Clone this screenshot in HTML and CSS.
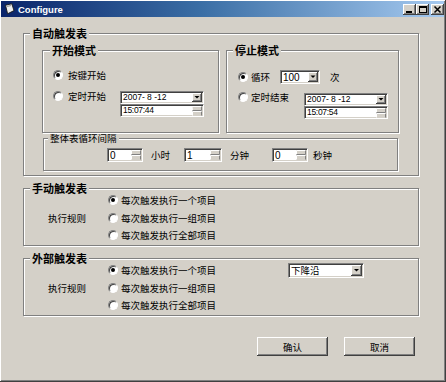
FILE: index.html
```html
<!DOCTYPE html>
<html>
<head>
<meta charset="utf-8">
<title>Configure</title>
<link rel="stylesheet" href="styles.css">
</head>
<body>
<div class="window">
  <div class="titlebar">
    <svg class="app-icon" width="12" height="12" viewBox="0 0 12 12"><path d="M2.5 2.2 L8.8 0.8 L11 7.6 L4.6 10.8 Z" fill="#f0f0f0" stroke="#1a1a1a" stroke-width="0.9"/><path d="M4 3.4 L8 2.6" stroke="#7a7a7a" stroke-width="0.8"/></svg>
    <span class="title-text">Configure</span>
    <div class="caption-btns">
      <div class="cap-btn"><svg width="13" height="11" viewBox="0 0 13 11"><rect x="3" y="7" width="6" height="2" fill="#000"/></svg></div>
      <div class="cap-btn"><svg width="13" height="11" viewBox="0 0 13 11"><rect x="3.5" y="2.5" width="7" height="6" fill="none" stroke="#000"/><rect x="3" y="2" width="8" height="2" fill="#000"/></svg></div>
      <div class="cap-btn close"><svg width="13" height="11" viewBox="0 0 13 11"><path d="M3.5 2.5 L9.5 8.5 M9.5 2.5 L3.5 8.5" stroke="#000" stroke-width="1.5"/></svg></div>
    </div>
  </div>

  <div class="client">
    <div class="group g-auto">
      <div class="gtitle bold">自动触发表</div>
      <div class="mode-row">
        <div class="group g-start">
          <div class="gtitle bold t-start">开始模式</div>
          <div class="opt start-r1"><span class="radio checked"></span><span class="lbl">按键开始</span></div>
          <div class="opt opt-top start-r2">
            <span class="radio"></span><span class="lbl">定时开始</span>
            <div class="dt dt-start">
              <div class="field date"><span class="val">2007- 8 -12</span>
                <svg class="ddb" width="10" height="9" viewBox="0 0 10 9"><rect width="10" height="9" fill="#404040"/><rect width="9" height="8" fill="#fff"/><rect x="1" y="1" width="8" height="7" fill="#808080"/><rect x="1" y="1" width="7" height="6" fill="#d4d0c8"/><path d="M2.5 3 H7.5 L5 5.5 Z" fill="#000"/></svg>
              </div>
              <div class="field time"><span class="val tval">15:07:44</span>
                <svg class="spn" width="10" height="10" viewBox="0 0 10 10"><rect width="10" height="10" fill="#d4d0c8"/><path d="M0 0.5H9.5V4.5H0.5Z" fill="none" stroke="#fff"/><path d="M0.5 4.5H9.5V0.5" fill="none" stroke="#808080"/><path d="M0.5 5.5H9.5V9.5" fill="none" stroke="#808080"/><path d="M0.5 9.5V5.5H9.5" fill="none" stroke="#fff"/></svg>
              </div>
            </div>
          </div>
        </div>

        <div class="group g-stop">
          <div class="gtitle bold">停止模式</div>
          <div class="opt stop-r1">
            <span class="radio checked"></span><span class="lbl lbl-stop w-loop">循环</span>
            <div class="field combo-100"><span class="val num">100</span>
              <svg class="ddb" width="10" height="10" viewBox="0 0 10 10"><rect width="10" height="10" fill="#404040"/><rect width="9" height="9" fill="#fff"/><rect x="1" y="1" width="8" height="8" fill="#808080"/><rect x="1" y="1" width="7" height="7" fill="#d4d0c8"/><path d="M2.5 3.5 H7.5 L5 6 Z" fill="#000"/></svg>
            </div>
            <span class="times">次</span>
          </div>
          <div class="opt opt-top stop-r2">
            <span class="radio"></span><span class="lbl lbl-stop">定时结束</span>
            <div class="dt dt-stop">
              <div class="field date"><span class="val">2007- 8 -12</span>
                <svg class="ddb" width="10" height="9" viewBox="0 0 10 9"><rect width="10" height="9" fill="#404040"/><rect width="9" height="8" fill="#fff"/><rect x="1" y="1" width="8" height="7" fill="#808080"/><rect x="1" y="1" width="7" height="6" fill="#d4d0c8"/><path d="M2.5 3 H7.5 L5 5.5 Z" fill="#000"/></svg>
              </div>
              <div class="field time"><span class="val tval">15:07:54</span>
                <svg class="spn" width="10" height="10" viewBox="0 0 10 10"><rect width="10" height="10" fill="#d4d0c8"/><path d="M0.5 4.5V0.5H9.5" fill="none" stroke="#fff"/><path d="M0.5 4.5H9.5V0.5" fill="none" stroke="#808080"/><path d="M0.5 5.5H9.5V9.5" fill="none" stroke="#808080"/><path d="M0.5 9.5V5.5H9.5" fill="none" stroke="#fff"/></svg>
              </div>
            </div>
          </div>
        </div>
      </div>

      <div class="group g-interval">
        <div class="gtitle t-int">整体表循环间隔</div>
        <div class="int-row">
          <div class="field spinbox sb1"><span class="val num">0</span>
            <svg class="spn" width="10" height="10" viewBox="0 0 10 10"><rect width="10" height="10" fill="#d4d0c8"/><path d="M0.5 4.5V0.5H9.5" fill="none" stroke="#fff"/><path d="M0.5 4.5H9.5V0.5" fill="none" stroke="#808080"/><path d="M0.5 5.5H9.5V9.5" fill="none" stroke="#808080"/><path d="M0.5 9.5V5.5H9.5" fill="none" stroke="#fff"/></svg>
          </div>
          <span class="unit u1">小时</span>
          <div class="field spinbox sb2"><span class="val num">1</span>
            <svg class="spn" width="10" height="10" viewBox="0 0 10 10"><rect width="10" height="10" fill="#d4d0c8"/><path d="M0.5 4.5V0.5H9.5" fill="none" stroke="#fff"/><path d="M0.5 4.5H9.5V0.5" fill="none" stroke="#808080"/><path d="M0.5 5.5H9.5V9.5" fill="none" stroke="#808080"/><path d="M0.5 9.5V5.5H9.5" fill="none" stroke="#fff"/></svg>
          </div>
          <span class="unit u2">分钟</span>
          <div class="field spinbox sb3"><span class="val num">0</span>
            <svg class="spn" width="10" height="10" viewBox="0 0 10 10"><rect width="10" height="10" fill="#d4d0c8"/><path d="M0.5 4.5V0.5H9.5" fill="none" stroke="#fff"/><path d="M0.5 4.5H9.5V0.5" fill="none" stroke="#808080"/><path d="M0.5 5.5H9.5V9.5" fill="none" stroke="#808080"/><path d="M0.5 9.5V5.5H9.5" fill="none" stroke="#fff"/></svg>
          </div>
          <span class="unit u3">秒钟</span>
        </div>
      </div>
    </div>

    <div class="group g-rule">
      <div class="gtitle bold">手动触发表</div>
      <div class="rule-body">
        <span class="rule-lbl">执行规则</span>
        <div class="radios">
          <div class="opt ropt"><span class="radio checked"></span><span class="lbl rl">每次触发执行一个项目</span></div>
          <div class="opt ropt"><span class="radio"></span><span class="lbl rl">每次触发执行一组项目</span></div>
          <div class="opt ropt"><span class="radio"></span><span class="lbl rl">每次触发执行全部项目</span></div>
        </div>
      </div>
    </div>

    <div class="group g-rule g-ext">
      <div class="gtitle bold">外部触发表</div>
      <div class="rule-body">
        <span class="rule-lbl">执行规则</span>
        <div class="radios">
          <div class="opt ropt"><span class="radio checked"></span><span class="lbl rl">每次触发执行一个项目</span></div>
          <div class="opt ropt"><span class="radio"></span><span class="lbl rl">每次触发执行一组项目</span></div>
          <div class="opt ropt"><span class="radio"></span><span class="lbl rl">每次触发执行全部项目</span></div>
        </div>
        <div class="field edge-combo"><span class="val">下降沿</span>
          <svg class="ddb" width="11" height="11" viewBox="0 0 11 11"><rect width="11" height="11" fill="#404040"/><rect width="10" height="10" fill="#fff"/><rect x="1" y="1" width="9" height="9" fill="#808080"/><rect x="1" y="1" width="8" height="8" fill="#d4d0c8"/><path d="M3 4 H8 L5.5 6.5 Z" fill="#000"/></svg>
        </div>
      </div>
    </div>

    <div class="buttons">
      <div class="btn">确认</div>
      <div class="btn">取消</div>
    </div>
  </div>
</div>
</body>
</html>
```

FILE: styles.css
```css
* { box-sizing: border-box; }
html, body { margin: 0; padding: 0; }
body {
  width: 446px;
  height: 382px;
  overflow: hidden;
  background: #d4d0c8;
  color: #000;
  font-family: "Noto Sans CJK SC", "Noto Sans", sans-serif;
  font-size: 9.5px;
}

.window {
  width: 446px;
  height: 382px;
  padding: 1px;
  background: #d4d0c8;
  border-right: 1px solid #404040;
  border-bottom: 1px solid #404040;
  box-shadow: inset 1px 1px #fff, inset -1px -1px #808080;
}

/* title bar */
.titlebar {
  height: 16px;
  display: flex;
  align-items: center;
  padding-left: 2px;
  background: linear-gradient(to right, #0a246a 0%, #3a6ea5 45%, #a6caf0 100%);
}
.app-icon { flex: none; }
.title-text {
  margin-left: 3px;
  color: #fff;
  font: bold 9.5px "Liberation Sans", Arial, sans-serif;
}
.caption-btns {
  margin-left: auto;
  display: flex;
}
.cap-btn {
  width: 13px;
  height: 11px;
  background: #d4d0c8;
  box-shadow: inset -1px -1px #404040, inset 1px 1px #fff, inset -2px -2px #808080;
  display: flex;
}
.cap-btn.close { margin-left: 2px; }

/* client area */
.client { padding: 16px 0 0 22px; }

.group {
  border: 1px solid #808080;
  box-shadow: inset 1px 1px #fff, 1px 1px #fff;
}
.gtitle {
  width: max-content;
  height: 14px;
  line-height: 14px;
  padding: 0 2px;
  margin: -8px 0 -6px 6px;
  background: #d4d0c8;
  white-space: nowrap;
}
.bold { font-weight: bold; font-size: 11px; }
.t-start { margin-left: 7px; }
.t-int { margin-left: 4px; }

.g-auto { width: 396px; height: 143px; }
.mode-row { display: flex; gap: 7px; margin: 16px 0 0 18px; }
.g-start { width: 177px; height: 83px; padding-right: 14px; }
.g-stop { width: 173px; height: 83px; padding-right: 10px; }

.opt { display: flex; align-items: center; height: 14px; line-height: 14px; white-space: nowrap; }
.opt-top { align-items: flex-start; height: auto; }
.opt-top .radio { margin-top: 2px; }

.radio {
  flex: none;
  width: 10px;
  height: 10px;
  border-radius: 50%;
  background: #fff;
  border: 1px solid;
  border-color: #808080 #fff #fff #808080;
  box-shadow: inset 1px 1px #404040;
  display: flex;
  align-items: center;
  justify-content: center;
}
.radio.checked::after {
  content: "";
  width: 4px;
  height: 4px;
  border-radius: 50%;
  background: #000;
}
.lbl { margin-left: 5px; }
.lbl-stop { margin-left: 3px; }

.start-r1 { margin: 17px 0 0 10px; }
.start-r2 { margin: 7px 0 0 10px; }
.stop-r1 { margin: 19px 0 0 11px; }
.stop-r2 { margin: 6px 0 0 11px; }
.w-loop { width: 29px; }
.times { margin-left: 10px; }

.dt { margin-left: auto; }
.dt-start { margin-top: 2px; }
.dt-stop { margin-top: 3px; }

.field {
  background: #fff;
  border: 1px solid;
  border-color: #808080 #fff #fff #808080;
  box-shadow: inset 1px 1px #404040, inset -1px -1px #d4d0c8;
  display: flex;
  align-items: center;
}
.date, .time { width: 84px; height: 13px; }
.val {
  padding-left: 2px;
  font: 8.5px "Liberation Sans", Arial, sans-serif;
  line-height: 11px;
  white-space: pre;
}
.tval { letter-spacing: -0.3px; }
.num { font-size: 10px; }
.ddb, .spn { margin-left: auto; margin-right: 1px; flex: none; }
.combo-100 { width: 40px; height: 14px; }
.combo-100 .ddb { margin-right: 1px; }

/* interval */
.g-interval { width: 355px; height: 33px; margin: 5px 0 0 19px; }
.int-row { display: flex; align-items: center; height: 14px; margin: 9px 0 0 63px; }
.spinbox { height: 14px; }
.sb1, .sb3 { width: 36px; }
.sb2 { width: 38px; }
.unit { margin-left: 8px; white-space: nowrap; }
.u1 { width: 33px; }
.u2 { width: 42px; }
.u3 { margin-left: 5px; }

/* rule groups */
.g-rule { width: 396px; height: 58px; margin-top: 12px; }
.rule-body { display: flex; align-items: center; margin: 2.5px 0 0 24px; }
.rule-lbl { width: 60px; white-space: nowrap; }
.radios { width: 120px; }
.ropt { height: 17.5px; }
.rl { margin-left: 3px; }
.edge-combo {
  align-self: flex-start;
  width: 76px;
  height: 15px;
  margin: 1.5px 0 0 60px;
}
.edge-combo .val { font-family: "Noto Sans CJK SC", sans-serif; font-size: 9.5px; line-height: 13px; }

/* buttons */
.buttons { display: flex; gap: 16px; margin: 21px 0 0 234px; }
.btn {
  width: 71px;
  height: 19px;
  display: flex;
  align-items: center;
  justify-content: center;
  background: #d4d0c8;
  box-shadow: inset -1px -1px #404040, inset 1px 1px #fff, inset -2px -2px #808080;
  font-size: 9.5px;
}
```
